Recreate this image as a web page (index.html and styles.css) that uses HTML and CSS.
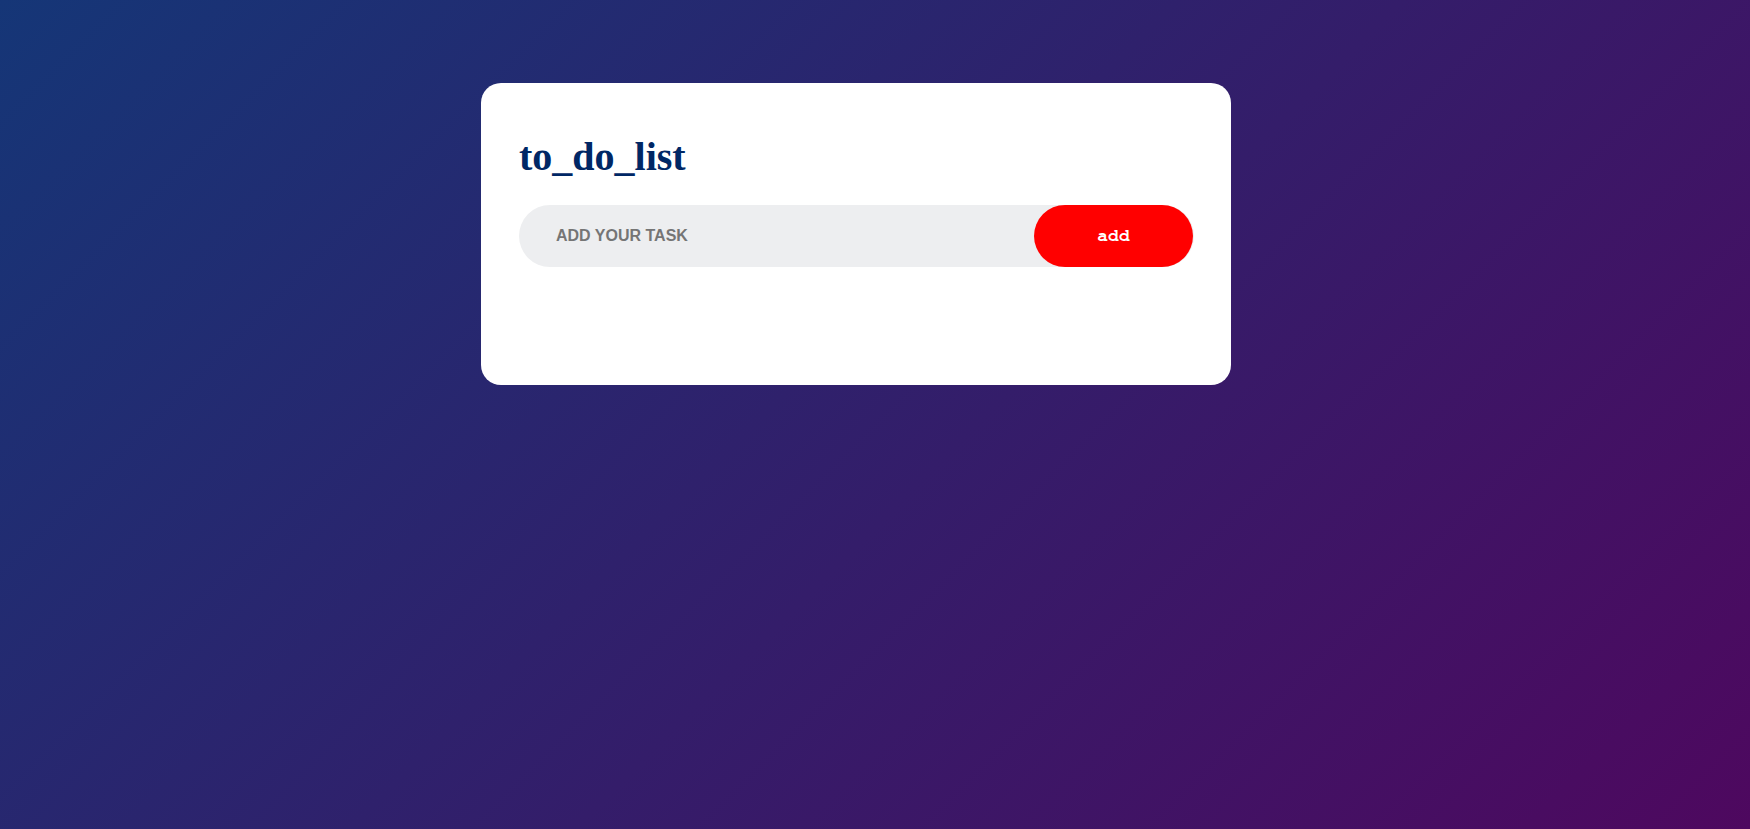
FILE: index.html
```html
<!DOCTYPE html>
<html>
<head>
<meta charset="utf-8">
<link rel="stylesheet" href="styles.css">
</head>
<body>
<div class="page">
  <div class="todo-app">
    <h2 class="title">to_do_list</h2>
    <div class="row">
      <input class="task-input" type="text" placeholder="ADD YOUR TASK">
      <button class="add-btn">add</button>
    </div>
    <ul class="list"></ul>
  </div>
</div>
</body>
</html>
```

FILE: styles.css
```css
html, body {
  margin: 0;
  padding: 0;
  height: 100%;
}
body {
  background: linear-gradient(135deg, #153677, #4e085f);
  overflow: hidden;
}
.page {
  padding: 83px 0 0 481px;
}
.todo-app {
  width: 750px;
  height: 302px;
  box-sizing: border-box;
  background: #fff;
  border-radius: 20px;
  padding: 51px 37px 0 38px;
}
.title {
  margin: 0 0 25px;
  font-family: "Liberation Serif", "Times New Roman", serif;
  font-weight: bold;
  font-size: 40px;
  line-height: 46px;
  color: #002765;
}
.row {
  display: flex;
  align-items: center;
  height: 62px;
  background: #edeef0;
  border-radius: 31px;
}
.task-input {
  flex: 1;
  min-width: 0;
  border: none;
  outline: none;
  background: transparent;
  padding: 0 0 0 37px;
  height: 62px;
  font-family: "Liberation Sans", Arial, sans-serif;
  font-weight: bold;
  font-size: 16px;
  color: #333;
}
.task-input::placeholder {
  color: #757575;
}
.add-btn {
  width: 159px;
  height: 62px;
  margin-right: 1px;
  border: none;
  border-radius: 31px;
  background: #ff0000;
  color: #fff;
  font-family: "Nimbus Mono PS", "Nimbus Mono L", FreeMono, Courier, "Courier New", "Liberation Mono", monospace;
  font-weight: bold;
  font-size: 18px;
  cursor: pointer;
  padding: 0;
}
.list {
  margin: 0;
  padding: 0;
  list-style: none;
}
```
